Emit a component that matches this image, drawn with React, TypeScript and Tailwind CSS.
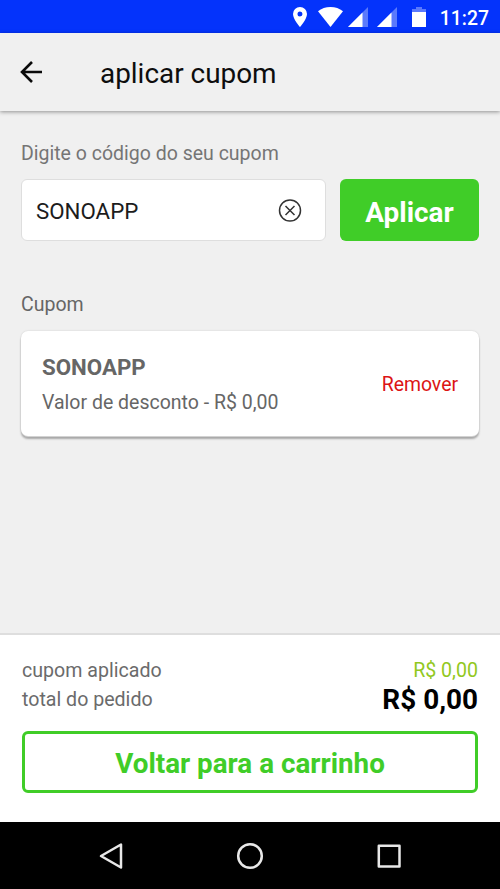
import React, { useState } from 'react';

const SignalIcon: React.FC = () => (
  <svg width="20" height="20" viewBox="0 0 20 20">
    <path d="M0 20L20 0v20z" fill="#fff" fillOpacity="0.35" />
    <path d="M0 20L14.500 5.500v14.500z" fill="#fff" />
  </svg>
);

const StatusBar: React.FC = () => (
  <div className="h-[33px] shrink-0 bg-[#0433fb] flex items-center justify-end pr-[11px] text-white">
    <svg width="14" height="20" viewBox="0 0 14 20" className="mr-[11px]">
      <path
        d="M7 0a7 7 0 0 0-7 7c0 5.200 7 13 7 13s7-7.800 7-13a7 7 0 0 0-7-7zm0 9.500a2.500 2.500 0 1 1 0-5 2.500 2.500 0 0 1 0 5z"
        fill="#fff"
      />
    </svg>
    <svg width="25" height="20" viewBox="0 0 25 20" className="mr-[5px]">
      <path d="M12.500 20L0 4.200C3.400 1.500 7.700 0 12.500 0S21.600 1.500 25 4.200z" fill="#fff" />
    </svg>
    <div className="flex gap-[9px] mr-[15px]">
      <SignalIcon />
      <SignalIcon />
    </div>
    <svg width="14" height="20" viewBox="0 0 14 20" className="mr-[14px]">
      <path d="M4 0h6v2h4v4H0V2h4z" fill="#fff" fillOpacity="0.35" />
      <path d="M0 5h14v15H0z" fill="#fff" />
    </svg>
    <span className="pt-[4px] text-[19.400px] leading-none font-medium">11:27</span>
  </div>
);

const Header: React.FC = () => (
  <header className="h-[78px] shrink-0 bg-[#f0f0f0] flex items-center shadow-[0_1px_4px_rgba(0,0,0,0.4)] z-10">
    <button className="ml-5 mr-[58px]" aria-label="Voltar">
      <svg width="22" height="22" viewBox="0 0 22 22" fill="none" stroke="#0a0a0a" strokeWidth="2.600">
        <path d="M22 11H2M12 1L2 11l10 10" />
      </svg>
    </button>
    <h1 className="pt-[3px] text-[27.900px] leading-none text-[#0d0d0d]">aplicar cupom</h1>
  </header>
);

const NavigationBar: React.FC = () => (
  <nav className="h-[67px] shrink-0 bg-black flex items-center justify-between px-[99px]">
    <svg width="24" height="28" viewBox="0 0 24 28" fill="none" stroke="#e8e8e8" strokeWidth="2.500" strokeLinejoin="round">
      <path d="M22 2.500v23L2 14z" />
    </svg>
    <svg width="28" height="28" viewBox="0 0 28 28" fill="none" stroke="#e8e8e8" strokeWidth="2.500">
      <circle cx="14" cy="14" r="11.800" />
    </svg>
    <svg width="24" height="24" viewBox="0 0 24 24" fill="none" stroke="#e8e8e8" strokeWidth="2.500" strokeLinejoin="round">
      <path d="M1.800 1.800h20.700v20.700H1.800z" />
    </svg>
  </nav>
);

const App: React.FC = () => {
  const [code, setCode] = useState('SONOAPP');

  return (
    <div className="h-screen flex flex-col overflow-hidden bg-[#f0f0f0] font-['Roboto',sans-serif]">
      <StatusBar />
      <Header />

      <main className="flex-1 px-[21px] pt-[31px]">
        {/* Coupon form */}
        <label className="block text-[19.500px] leading-6 text-[#757575]">Digite o código do seu cupom</label>
        <div className="flex gap-[14px] mt-[13px]">
          <div className="w-[305px] h-[62px] flex items-center bg-white border-[1.500px] border-[#dedede] rounded-[6px] pl-[14px] pr-[23px]">
            <input
              value={code}
              onChange={(e) => setCode(e.target.value)}
              className="flex-1 min-w-0 pt-[3px] text-[22.300px] text-[#1c1c1c] outline-none"
            />
            <button onClick={() => setCode('')} aria-label="Limpar">
              <svg width="24" height="24" viewBox="0 0 24 24" fill="none" stroke="#333" strokeWidth="1.500">
                <circle cx="12" cy="12.500" r="10.500" />
                <path d="M7.500 8l9 9M16.500 8l-9 9" />
              </svg>
            </button>
          </div>
          <button className="w-[139px] h-[62px] pt-[5px] bg-[#40cd28] rounded-[6px] text-white text-[27.900px] font-bold">
            Aplicar
          </button>
        </div>

        {/* Applied coupon */}
        <h2 className="mt-[52px] text-[19.500px] leading-6 text-[#666]">Cupom</h2>
        <div className="mt-[14px] h-[105px] flex items-center justify-between bg-white rounded-[7px] px-[21px] pt-0.5 shadow-[0_1px_0_#d2d2d2,0_3px_2px_rgba(0,0,0,0.3),0_0_2px_rgba(0,0,0,0.15)]">
          <div>
            <p className="text-[22.300px] leading-[35px] font-bold text-[#666]">SONOAPP</p>
            <p className="text-[19.500px] leading-[35px] text-[#666]">Valor de desconto - R$ 0,00</p>
          </div>
          <button className="text-[19.400px] text-[#dc1414]">Remover</button>
        </div>
      </main>

      {/* Order summary */}
      <footer className="h-[189px] shrink-0 bg-white border-t-2 border-[#dedede] px-[22px] pt-[21px]">
        <div className="flex justify-between text-[19.600px] leading-[29px] text-[#6b6b6b]">
          <span>cupom aplicado</span>
          <span className="text-[#92c81e]">R$ 0,00</span>
        </div>
        <div className="flex justify-between text-[19.600px] leading-[29px] text-[#6b6b6b]">
          <span>total do pedido</span>
          <span className="text-[27.900px] font-bold text-black">R$ 0,00</span>
        </div>
        <button className="mt-[17px] w-full h-[62px] pt-[3px] border-[3px] border-[#40cd28] rounded-[6px] text-[27.800px] font-bold text-[#40cd28]">
          Voltar para a carrinho
        </button>
      </footer>

      <NavigationBar />
    </div>
  );
};

export default App;
